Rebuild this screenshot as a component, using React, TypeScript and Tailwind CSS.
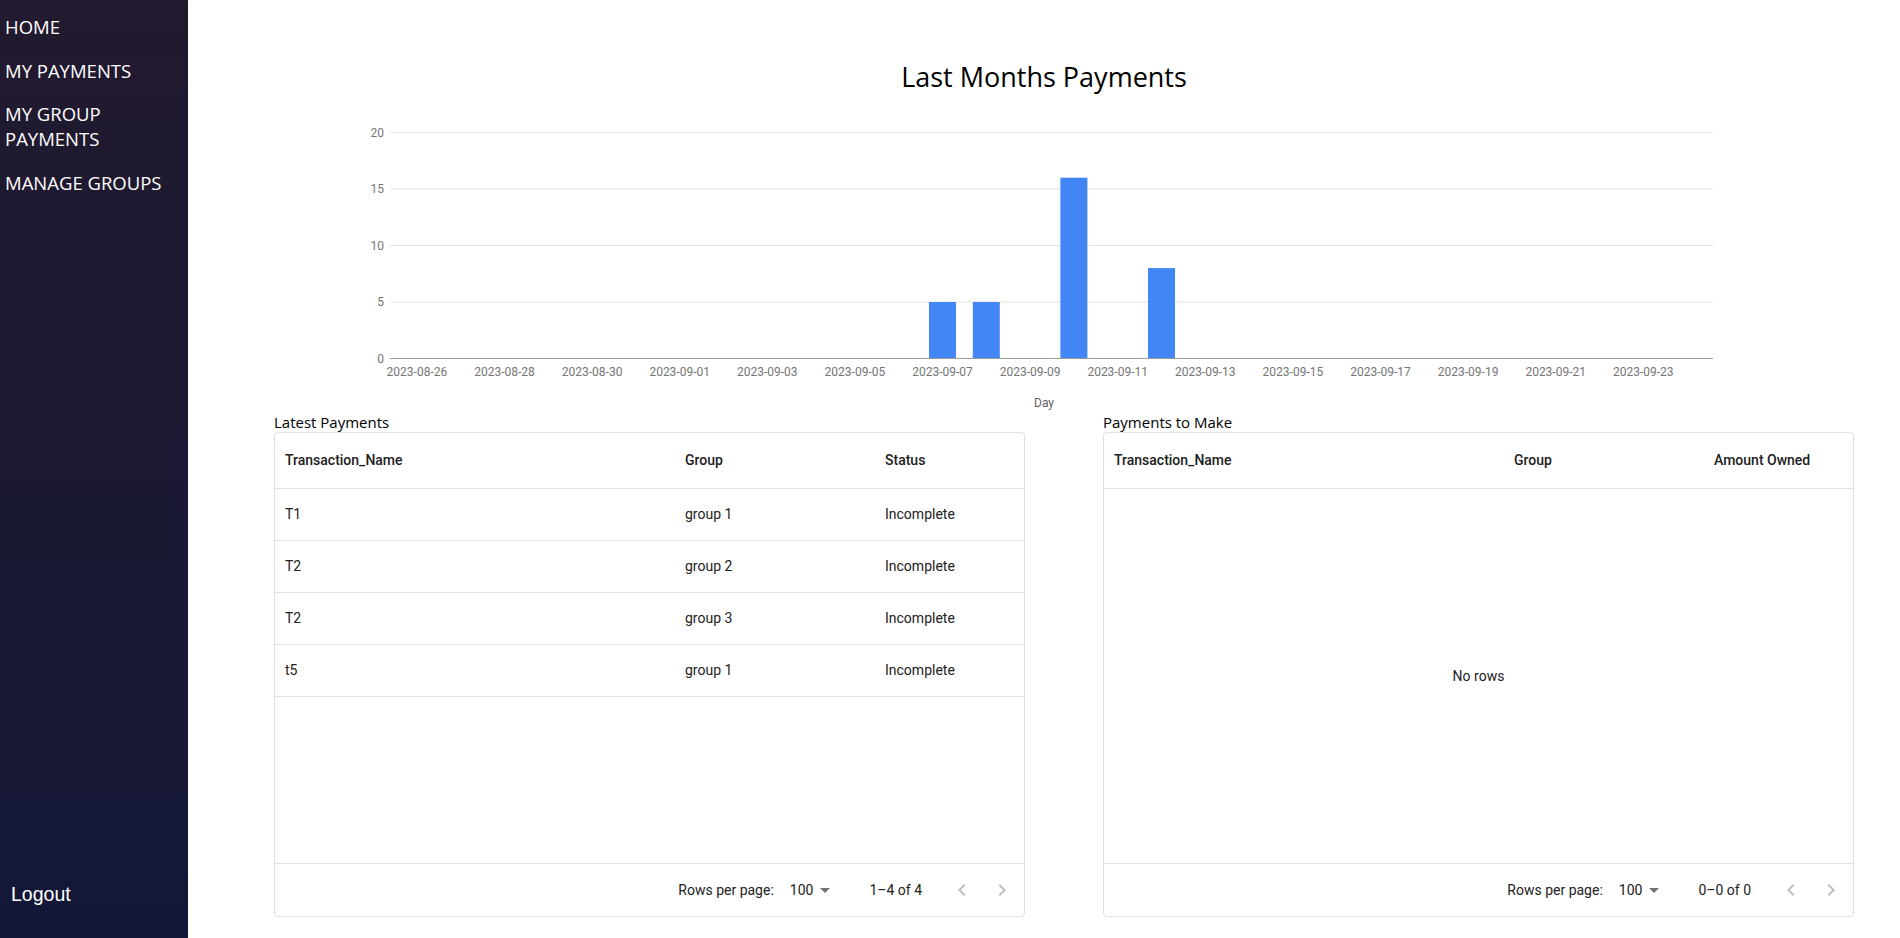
// ─── Sidebar ──────────────────────────────────────────────────────────────────

const NAV_ITEMS = ["HOME", "MY PAYMENTS", "MY GROUP PAYMENTS", "MANAGE GROUPS"];

function Sidebar() {
  return (
    <aside className="flex h-screen w-[188px] shrink-0 flex-col justify-between bg-linear-to-b from-[#221a2f] to-[#131737] text-white">
      <nav className="flex flex-col gap-[18.5px] pl-[5px] pr-[10px] pt-[14px] font-['Open_Sans',sans-serif] text-[18.5px] leading-[25px]">
        {NAV_ITEMS.map((item) => (
          <a key={item} href="#" className="block">
            {item}
          </a>
        ))}
      </nav>
      <button className="mb-[32px] ml-[11px] text-left font-['Liberation_Sans',Arial,sans-serif] text-[19.5px] leading-[24px] text-white">
        Logout
      </button>
    </aside>
  );
}

// ─── Chart ────────────────────────────────────────────────────────────────────

const Y_TICKS = [0, 5, 10, 15, 20];
const X_LABELS = [
  "2023-08-26",
  "2023-08-28",
  "2023-08-30",
  "2023-09-01",
  "2023-09-03",
  "2023-09-05",
  "2023-09-07",
  "2023-09-09",
  "2023-09-11",
  "2023-09-13",
  "2023-09-15",
  "2023-09-17",
  "2023-09-19",
  "2023-09-21",
  "2023-09-23",
];
// day index from 2023-08-26 -> amount
const BARS = [
  { d: 12, v: 5 },
  { d: 13, v: 5 },
  { d: 15, v: 16 },
  { d: 17, v: 8 },
];

const yOf = (v: number) => 358.5 - v * 11.3;
const xOf = (d: number) => 416.9 + 43.8 * d;

function PaymentsChart() {
  return (
    <svg
      width={1712}
      height={312}
      viewBox="188 100 1712 312"
      className="block shrink-0 font-['Roboto',sans-serif]"
    >
      {Y_TICKS.filter((t) => t > 0).map((t) => (
        <line key={t} x1={390} x2={1713} y1={yOf(t)} y2={yOf(t)} stroke="#e3e3e3" strokeWidth={1} />
      ))}
      {BARS.map((b) => (
        <rect key={b.d} x={xOf(b.d) - 13.5} y={yOf(b.v)} width={27} height={358.5 - yOf(b.v)} fill="#4285f4" />
      ))}
      <line x1={390} x2={1713} y1={358.5} y2={358.5} stroke="#9a9a9a" strokeWidth={1} />
      {Y_TICKS.map((t) => (
        <text key={t} x={384} y={yOf(t) + 4} textAnchor="end" fontSize={12} fill="#757575">
          {t}
        </text>
      ))}
      {X_LABELS.map((l, i) => (
        <text key={l} x={xOf(i * 2)} y={376} textAnchor="middle" fontSize={12} fill="#757575">
          {l}
        </text>
      ))}
      <text x={1044} y={407} textAnchor="middle" fontSize={12} fill="#5f5f5f">
        Day
      </text>
    </svg>
  );
}

// ─── Data table ───────────────────────────────────────────────────────────────

function ChevronLeft() {
  return (
    <svg viewBox="0 0 24 24" className="h-[24px] w-[24px] fill-black/25">
      <path d="M15.41 16.59 10.83 12l4.58-4.59L14 6l-6 6 6 6 1.41-1.41z" />
    </svg>
  );
}

function ChevronRight() {
  return (
    <svg viewBox="0 0 24 24" className="h-[24px] w-[24px] fill-black/25">
      <path d="M8.59 16.59 13.17 12 8.59 7.41 10 6l6 6-6 6-1.41-1.41z" />
    </svg>
  );
}

interface DataTableProps {
  title: string;
  columns: string[];
  rows: string[][];
  range: string;
}

function DataTable({ title, columns, rows, range }: DataTableProps) {
  const widths = ["w-[400px]", "w-[200px]", "flex-1"];
  return (
    <section className="flex min-w-0 flex-1 flex-col">
      <h2 className="font-['Open_Sans',sans-serif] text-[15px] leading-[20px] text-black">{title}</h2>
      <div className="flex h-[485px] flex-col rounded-[4px] border border-[#e0e0e0] font-['Roboto',sans-serif] text-[14px] text-[#212121]">
        <div className="flex h-[56px] shrink-0 items-center border-b border-[#e0e0e0] font-medium">
          {columns.map((c, i) => (
            <div key={c} className={`${widths[i]} shrink-0 pl-[10px]`}>
              {c}
            </div>
          ))}
        </div>
        <div className="flex min-h-0 flex-1 flex-col">
          {rows.length === 0 ? (
            <div className="flex flex-1 items-center justify-center">No rows</div>
          ) : (
            rows.map((r, ri) => (
              <div key={ri} className="flex h-[52px] shrink-0 items-center border-b border-[#e0e0e0]">
                {r.map((cell, i) => (
                  <div key={i} className={`${widths[i]} shrink-0 pl-[10px]`}>
                    {cell}
                  </div>
                ))}
              </div>
            ))
          )}
        </div>
        <div className="flex h-[53px] shrink-0 items-center justify-end border-t border-[#e0e0e0] pr-[2px]">
          <span>Rows per page:</span>
          <div className="relative ml-[8px] mr-[32px] pl-[8px] pr-[24px]">
            100
            <svg viewBox="0 0 24 24" className="absolute right-0 top-1/2 h-[24px] w-[24px] -translate-y-1/2 fill-black/55">
              <path d="M7 10l5 5 5-5z" />
            </svg>
          </div>
          <span>{range}</span>
          <div className="ml-[20px] flex">
            <button className="flex h-[40px] w-[40px] items-center justify-center">
              <ChevronLeft />
            </button>
            <button className="flex h-[40px] w-[40px] items-center justify-center">
              <ChevronRight />
            </button>
          </div>
        </div>
      </div>
    </section>
  );
}

// ─── Page ─────────────────────────────────────────────────────────────────────

const LATEST = [
  ["T1", "group 1", "Incomplete"],
  ["T2", "group 2", "Incomplete"],
  ["T2", "group 3", "Incomplete"],
  ["t5", "group 1", "Incomplete"],
];

export default function App() {
  return (
    <div className="flex h-screen w-full overflow-hidden bg-white">
      <Sidebar />
      <main className="flex h-screen min-w-0 flex-1 flex-col">
        <h1 className="mt-[58px] text-center font-['Open_Sans',sans-serif] text-[27px] leading-[38px] text-black">
          Last Months Payments
        </h1>
        <div className="mt-[4px]">
          <PaymentsChart />
        </div>
        <div className="flex gap-[78px] pl-[86px] pr-[46px]">
          <DataTable
            title="Latest Payments"
            columns={["Transaction_Name", "Group", "Status"]}
            rows={LATEST}
            range="1–4 of 4"
          />
          <DataTable
            title="Payments to Make"
            columns={["Transaction_Name", "Group", "Amount Owned"]}
            rows={[]}
            range="0–0 of 0"
          />
        </div>
      </main>
    </div>
  );
}
